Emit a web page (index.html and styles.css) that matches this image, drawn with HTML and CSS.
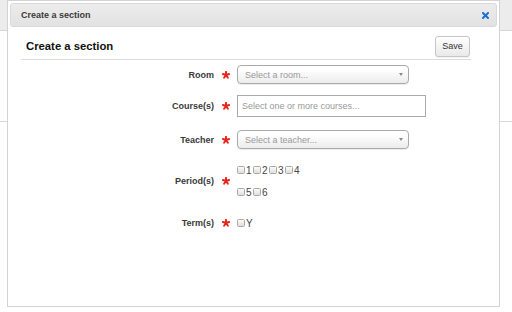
FILE: index.html
```html
<!DOCTYPE html>
<html>
<head>
<meta charset="utf-8">
<link rel="stylesheet" href="styles.css">
</head>
<body>
<div class="page">
  <div class="topbar"></div>
  <div class="rule"></div>
</div>
<div class="dialog">
  <div class="titlebar">
    <span class="title">Create a section</span>
    <svg class="close" width="7" height="7" viewBox="0 0 7 7"><path d="M1 1 L6 6 M6 1 L1 6" stroke="#1d6fd6" stroke-width="2" stroke-linecap="square"/></svg>
  </div>
  <div class="content">
    <div class="head">
      <h1 class="heading">Create a section</h1>
      <button class="btn">Save</button>
    </div>
    <div class="form">
      <div class="row r1">
        <label class="lbl">Room</label>
        <svg class="star" width="8" height="8" viewBox="0 0 8 8"><path d="M4 0.8 V4 M4 4 L7.1 3 M4 4 L5.9 6.7 M4 4 L2.1 6.7 M4 4 L0.9 3" stroke="#e8231a" stroke-width="1.9" stroke-linecap="round"/></svg>
        <div class="select"><span>Select a room...</span><i class="arrow"></i></div>
      </div>
      <div class="row r2">
        <label class="lbl">Course(s)</label>
        <svg class="star" width="8" height="8" viewBox="0 0 8 8"><path d="M4 0.8 V4 M4 4 L7.1 3 M4 4 L5.9 6.7 M4 4 L2.1 6.7 M4 4 L0.9 3" stroke="#e8231a" stroke-width="1.9" stroke-linecap="round"/></svg>
        <div class="input"><span>Select one or more courses...</span></div>
      </div>
      <div class="row r3">
        <label class="lbl">Teacher</label>
        <svg class="star" width="8" height="8" viewBox="0 0 8 8"><path d="M4 0.8 V4 M4 4 L7.1 3 M4 4 L5.9 6.7 M4 4 L2.1 6.7 M4 4 L0.9 3" stroke="#e8231a" stroke-width="1.9" stroke-linecap="round"/></svg>
        <div class="select"><span>Select a teacher...</span><i class="arrow"></i></div>
      </div>
      <div class="row r4">
        <label class="lbl">Period(s)</label>
        <svg class="star" width="8" height="8" viewBox="0 0 8 8"><path d="M4 0.8 V4 M4 4 L7.1 3 M4 4 L5.9 6.7 M4 4 L2.1 6.7 M4 4 L0.9 3" stroke="#e8231a" stroke-width="1.9" stroke-linecap="round"/></svg>
        <div class="checks">
          <div class="cline">
            <span class="cb"><i class="box"></i>1</span>
            <span class="cb"><i class="box"></i>2</span>
            <span class="cb"><i class="box"></i>3</span>
            <span class="cb"><i class="box"></i>4</span>
          </div>
          <div class="cline">
            <span class="cb"><i class="box"></i>5</span>
            <span class="cb"><i class="box"></i>6</span>
          </div>
        </div>
      </div>
      <div class="row r5">
        <label class="lbl">Term(s)</label>
        <svg class="star" width="8" height="8" viewBox="0 0 8 8"><path d="M4 0.8 V4 M4 4 L7.1 3 M4 4 L5.9 6.7 M4 4 L2.1 6.7 M4 4 L0.9 3" stroke="#e8231a" stroke-width="1.9" stroke-linecap="round"/></svg>
        <div class="checks">
          <div class="cline"><span class="cb"><i class="box"></i>Y</span></div>
        </div>
      </div>
    </div>
  </div>
</div>
</body>
</html>
```
FILE: styles.css
```css
html, body {
  margin: 0;
  padding: 0;
}
body {
  width: 512px;
  height: 312px;
  overflow: hidden;
  position: relative;
  background: #fff;
  font-family: "Liberation Sans", Arial, sans-serif;
  color: #333;
}
.topbar {
  height: 30px;
  background: #ececec;
  border-bottom: 1px solid #d6d6d6;
}
.rule {
  margin-top: 90px;
  border-top: 1px solid #d8d8d8;
}
.dialog {
  position: absolute;
  left: 7px;
  top: 0;
  width: 493px;
  height: 307px;
  box-sizing: border-box;
  border: 1px solid #d3d3d3;
  padding: 2px;
  background: #fff;
}
.titlebar {
  height: 24px;
  box-sizing: border-box;
  border: 1px solid #d9d9d9;
  border-radius: 3px;
  background: linear-gradient(#ececec, #e2e2e2);
  display: flex;
  align-items: center;
  justify-content: space-between;
  padding: 0 7px 0 10px;
}
.title {
  font-size: 9px;
  font-weight: bold;
  color: #3a3a3a;
}
.close {
  display: block;
}
.content {
  padding: 6px 0 0 11px;
}
.head {
  width: 450px;
  height: 26px;
  border-bottom: 1px solid #dcdcdc;
  display: flex;
  align-items: center;
  justify-content: space-between;
  padding: 0 1px 0 5px;
  box-sizing: content-box;
  margin-left: 0;
}
.head {
  width: 444px;
}
.heading {
  margin: 0;
  font-size: 11.3px;
  font-weight: bold;
  color: #111;
}
.btn {
  width: 35px;
  height: 21px;
  padding: 0;
  font-family: "Liberation Sans", Arial, sans-serif;
  font-size: 9px;
  color: #333;
  border: 1px solid #c6c6c6;
  border-radius: 3px;
  background: linear-gradient(#ffffff, #e9e9e9);
  box-shadow: 0 1px 1px rgba(0,0,0,0.06);
}
.form {
  display: flex;
  flex-direction: column;
}
.row {
  display: flex;
  align-items: center;
}
.r1 { margin-top: 5px; height: 19px; }
.r2 { margin-top: 11px; height: 22px; }
.r3 { margin-top: 13px; height: 19px; }
.r4 { margin-top: 10px; height: 44px; }
.r5 { margin-top: 9px; height: 22px; }
.lbl {
  width: 193px;
  text-align: right;
  font-size: 9px;
  font-weight: bold;
  color: #3a3a3a;
}
.star {
  display: block;
  margin: 0 7px 0 8px;
}
.select {
  width: 172px;
  height: 19px;
  box-sizing: border-box;
  border: 1px solid #aaa;
  border-radius: 4px;
  background: linear-gradient(#ffffff 20%, #ececec 100%);
  box-shadow: 0 1px 1px rgba(0,0,0,0.08);
  display: flex;
  align-items: center;
  justify-content: space-between;
  padding: 0 5px 0 7px;
  font-size: 9px;
  color: #999;
}
.arrow {
  width: 0;
  height: 0;
  border-left: 2.5px solid transparent;
  border-right: 2.5px solid transparent;
  border-top: 3px solid #8a8a8a;
}
.input {
  width: 189px;
  height: 22px;
  box-sizing: border-box;
  border: 1px solid #aaa;
  display: flex;
  align-items: center;
  padding-left: 4px;
  font-size: 9px;
  color: #999;
}
.checks {
  display: flex;
  flex-direction: column;
}
.cline {
  height: 22px;
  display: flex;
  align-items: center;
}
.cb {
  display: flex;
  align-items: center;
  width: 16px;
  font-size: 10px;
  color: #444;
}
.box {
  display: block;
  width: 8px;
  height: 8px;
  box-sizing: border-box;
  border: 1px solid #a8a8a8;
  border-radius: 1.5px;
  background: linear-gradient(#fbfbfb, #dedede);
  margin-right: 1px;
}
```
